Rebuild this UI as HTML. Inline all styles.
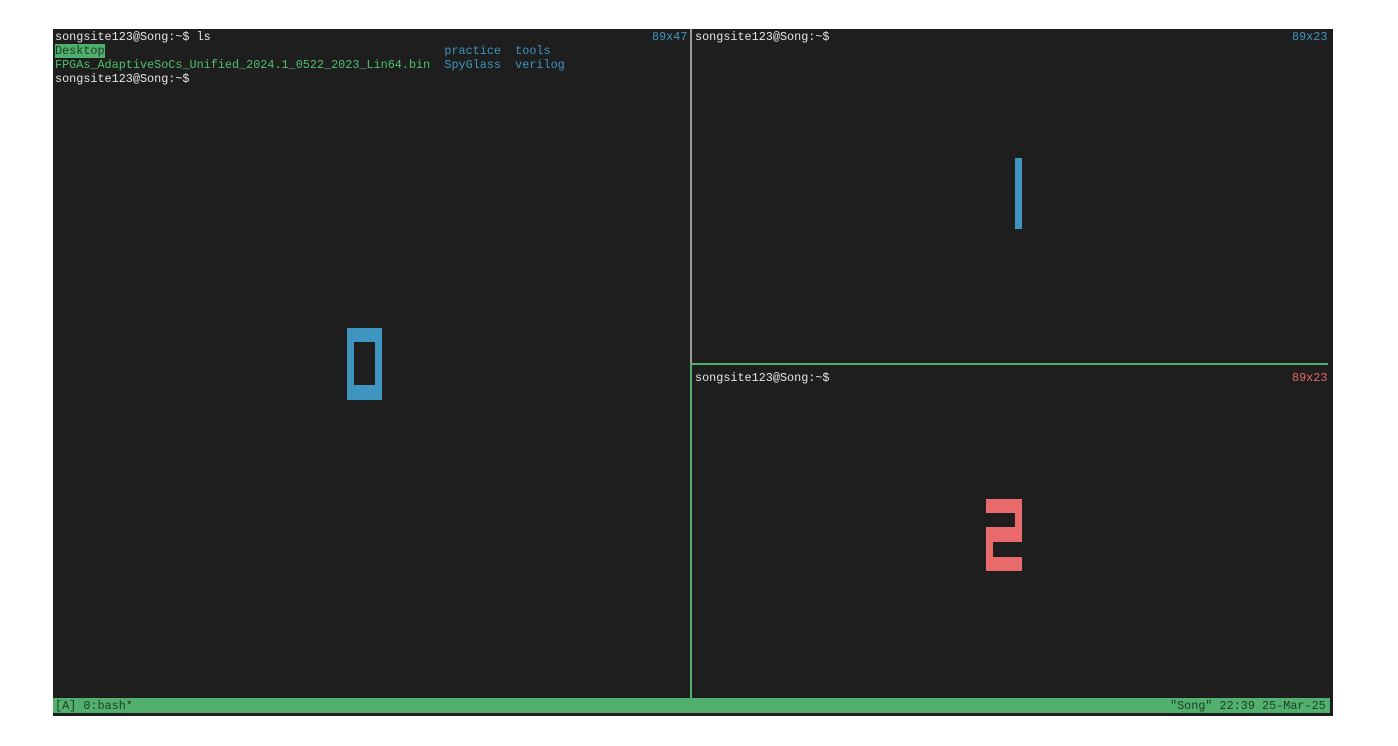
<!DOCTYPE html>
<html><head><meta charset="utf-8"><style>
html,body{margin:0;padding:0;background:#fff;width:1398px;height:746px;overflow:hidden}
.t{position:absolute;left:53px;top:29px;width:1280px;height:687px;background:#1e1e1e}
.l{position:absolute;font-family:"Liberation Mono","DejaVu Sans Mono",monospace;font-size:11.8px;line-height:14px;white-space:pre;color:#e6e6e6}
.b{position:absolute}
.g{color:#4fc06e}.bl{color:#3e96c0}.r{color:#e46a6a}
</style></head><body>
<div class="t"></div>
<div class="l" style="left:55px;top:30px">songsite123@Song:~$ ls
<span style="background:#4fb06e;color:#1e3a25">Desktop</span>                                                <span class="bl">practice  tools</span>
<span class="g">FPGAs_AdaptiveSoCs_Unified_2024.1_0522_2023_Lin64.bin</span>  <span class="bl">SpyGlass  verilog</span>
songsite123@Song:~$</div>
<div class="l bl" style="left:652px;top:30px">89x47</div>
<div class="l" style="left:695px;top:30px">songsite123@Song:~$</div>
<div class="l bl" style="left:1292px;top:30px">89x23</div>
<div class="l" style="left:695px;top:371px">songsite123@Song:~$</div>
<div class="l r" style="left:1292px;top:371px">89x23</div>
<div class="b" style="left:690px;top:29px;width:2px;height:335px;background:#9a9a9a"></div>
<div class="b" style="left:690px;top:364px;width:2px;height:334px;background:#4fb06e"></div>
<div class="b" style="left:691px;top:363px;width:637px;height:2px;background:#4fb06e"></div>
<div class="b" style="left:347px;top:328px;width:35px;height:72px;background:#3e96c0"></div>
<div class="b" style="left:354px;top:342px;width:21px;height:43px;background:#1e1e1e"></div>
<div class="b" style="left:1015px;top:158px;width:7px;height:71px;background:#3e96c0"></div>
<div class="b" style="left:986px;top:499px;width:36px;height:72px;background:#e96a6a"></div>
<div class="b" style="left:986px;top:513px;width:29px;height:14px;background:#1e1e1e"></div>
<div class="b" style="left:993px;top:542px;width:29px;height:15px;background:#1e1e1e"></div>
<div class="b" style="left:53px;top:698px;width:1277px;height:15px;background:#52b06e"></div>
<div class="l" style="left:55px;top:699px;color:#1f3a26">[A] 0:bash*</div>
<div class="l" style="left:1170px;top:699px;color:#1f3a26">"Song" 22:39 25-Mar-25</div>
</body></html>
